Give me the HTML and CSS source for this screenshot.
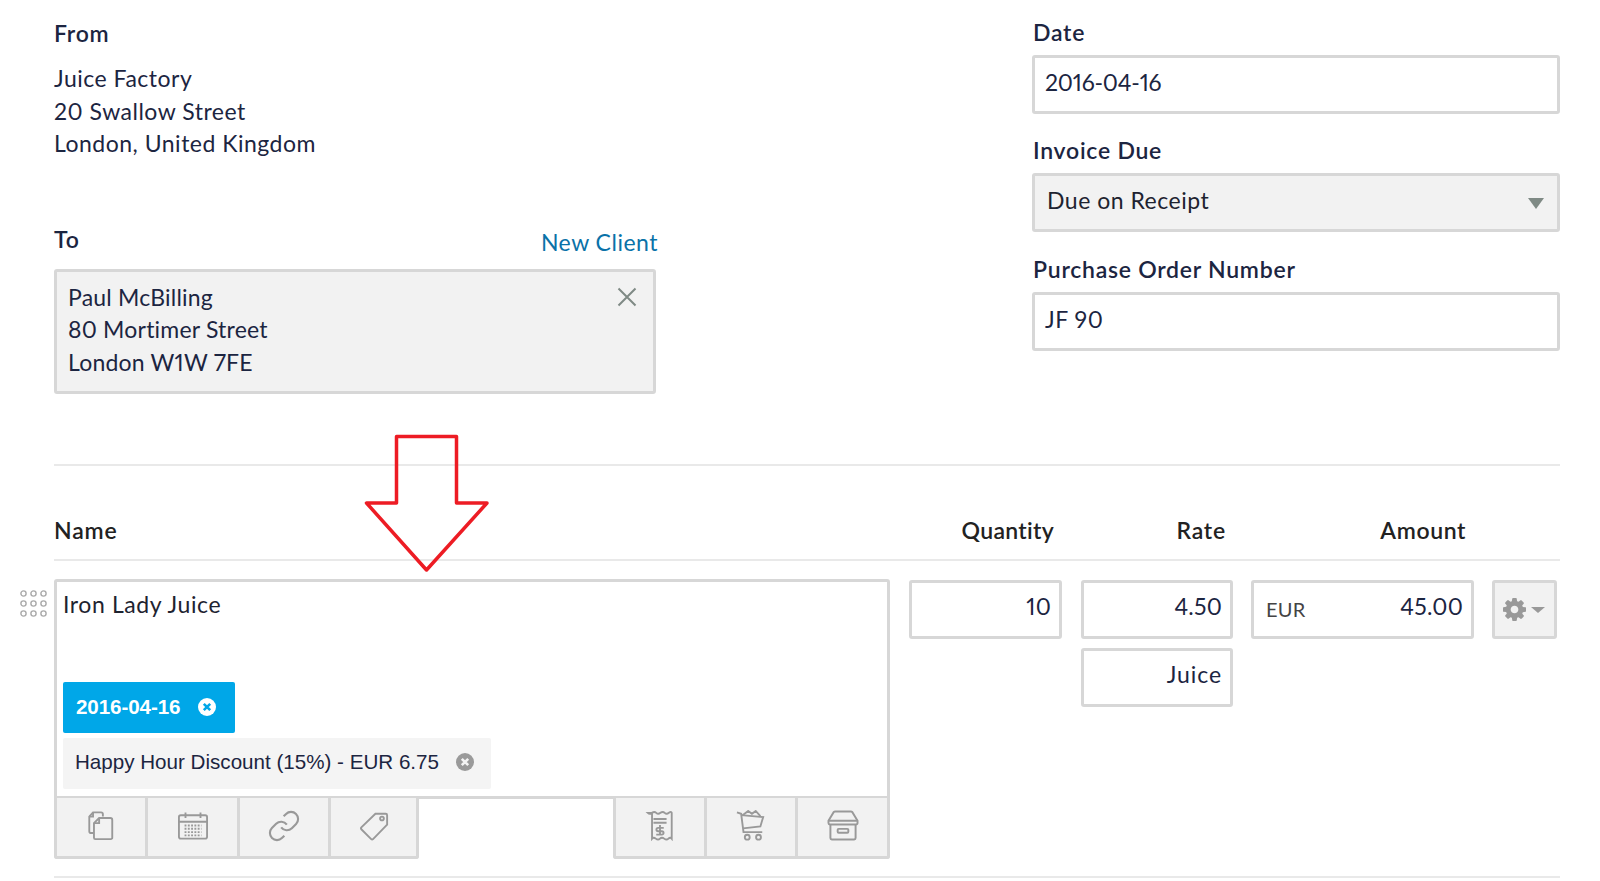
FILE: index.html
```html
<!DOCTYPE html>
<html lang="en">
<head>
<meta charset="utf-8">
<title>Invoice</title>
<link rel="stylesheet" href="styles.css">
</head>
<body>
<main class="page">
  <section class="top">
    <div class="left">
      <div class="label from-label">From</div>
      <div class="address">Juice Factory<br>20 Swallow Street<br>London, United Kingdom</div>
      <div class="to-row">
        <div class="label">To</div>
        <a class="link">New Client</a>
      </div>
      <div class="box to-box">
        <div class="address">Paul McBilling<br>80 Mortimer Street<br>London W1W 7FE</div>
        <svg class="close" viewBox="0 0 20 20"><path d="M1.500 1.500L18.500 18.500M18.500 1.500L1.500 18.500"/></svg>
      </div>
    </div>
    <div class="right">
      <div class="field">
        <div class="label">Date</div>
        <div class="box input date-value">2016-04-16</div>
      </div>
      <div class="field">
        <div class="label">Invoice Due</div>
        <div class="box input select"><span>Due on Receipt</span><i class="caret"></i></div>
      </div>
      <div class="field">
        <div class="label">Purchase Order Number</div>
        <div class="box input">JF 90</div>
      </div>
    </div>
  </section>

  <hr class="rule first-rule">

  <section class="grid head">
    <div>Name</div>
    <div class="num qty">Quantity</div>
    <div class="num rate">Rate</div>
    <div class="num amount-head">Amount</div>
  </section>
  <hr class="rule head-rule">

  <section class="grid line">
    <div class="item">
      <svg class="drag" viewBox="0 0 27 27">
        <circle cx="3.500" cy="3.500" r="2.600"/><circle cx="13.500" cy="3.500" r="2.600"/><circle cx="23.500" cy="3.500" r="2.600"/>
        <circle cx="3.500" cy="13.500" r="2.600"/><circle cx="13.500" cy="13.500" r="2.600"/><circle cx="23.500" cy="13.500" r="2.600"/>
        <circle cx="3.500" cy="23.500" r="2.600"/><circle cx="13.500" cy="23.500" r="2.600"/><circle cx="23.500" cy="23.500" r="2.600"/>
      </svg>
      <div class="item-body">
        <div class="item-name">Iron Lady Juice</div>
        <div class="tag tag-date"><span>2016-04-16</span>
          <svg class="tag-x" viewBox="0 0 18 18"><circle cx="9" cy="9" r="9"/><path d="M5.800 5.800L12.200 12.200M12.200 5.800L5.800 12.200"/></svg>
        </div>
        <div class="tag tag-discount"><span>Happy Hour Discount (15%) - EUR 6.75</span>
          <svg class="tag-x" viewBox="0 0 18 18"><circle cx="9" cy="9" r="9"/><path d="M5.800 5.800L12.200 12.200M12.200 5.800L5.800 12.200"/></svg>
        </div>
      </div>
      <div class="toolbar">
        <div class="tools tools-left">
          <div class="tool"><svg class="icon" viewBox="0 0 32 32"><path d="M8 24H5.500a2 2 0 0 1-2-2V6.500L7.500 2H16a2 2 0 0 1 2 2v2.500"/><path d="M7.500 2v4.500H3.500"/><path d="M14 8h12a2 2 0 0 1 2 2v19a1.500 1.500 0 0 1-1.500 1.500H10a1.500 1.500 0 0 1-1.500-1.500V13.500z"/><path d="M14 8v5.500H8.500"/></svg></div>
          <div class="tool"><svg class="icon" viewBox="0 0 32 32"><rect x="1" y="5" width="30" height="25" rx="2"/><path d="M1 12h30M8 2v6M24 2v6"/><path class="dots" d="M7 16h18M7 19.500h18M7 23h18M7 26.500h18"/></svg></div>
          <div class="tool"><svg class="icon icon-link" viewBox="0 0 24 24"><path d="M10 13a5 5 0 0 0 7.540.540l3-3a5 5 0 0 0-7.070-7.070l-1.720 1.710"/><path d="M14 11a5 5 0 0 0-7.540-.540l-3 3a5 5 0 0 0 7.070 7.070l1.710-1.710"/></svg></div>
          <div class="tool"><svg class="icon" viewBox="0 0 32 32"><path d="M17.500 3.500H28.500a1.500 1.500 0 0 1 1.500 1.500V15L15 30.500a1.500 1.500 0 0 1-2 0L2.500 20a1.500 1.500 0 0 1 0-2z"/><circle cx="24.500" cy="8.500" r="2"/></svg></div>
        </div>
        <div class="tools tools-right">
          <div class="tool"><svg class="icon" viewBox="0 0 32 32"><path d="M3 2.500q2 2 4.500 0t4.500 0 4.500 0 4.500 0 4.500 0 3 0V30q-1.500-2-3.500 0t-4.500 0-4.500 0-4.500 0-4 0V2.500z"/><path d="M9 9h14M9 13h14M16 15.500v11M20 18.500h-6a1.800 1.800 0 0 0 0 3.600h4a1.800 1.800 0 0 1 0 3.600h-6"/></svg></div>
          <div class="tool"><svg class="icon" viewBox="0 0 32 32"><path d="M1 2l4.500 1.500L8 23h20"/><path d="M5.500 5L29 7l-3 10-18.500 2"/><path d="M7 5l6-4.500 4 3 4-3 5 5.500"/><circle cx="12" cy="28.500" r="2.600"/><circle cx="24" cy="28.500" r="2.600"/></svg></div>
          <div class="tool"><svg class="icon icon-box" viewBox="0 0 32 32"><path d="M1 11L6.500 2a2 2 0 0 1 1.500-.5h16a2 2 0 0 1 1.500.5L31 11v2.500a1.500 1.500 0 0 1-1.500 1.500h-27A1.500 1.500 0 0 1 1 13.500z"/><path d="M1 11h30M3 15v14a1.500 1.500 0 0 0 1.500 1.500h23A1.500 1.500 0 0 0 29 29V15"/><rect x="10.500" y="19.500" width="11" height="4" rx="1"/></svg></div>
        </div>
      </div>
    </div>
    <div class="box cell qty">10</div>
    <div class="rate">
      <div class="box cell">4.50</div>
      <div class="box cell unit">Juice</div>
    </div>
    <div class="box cell amount"><span class="currency">EUR</span><span>45.00</span></div>
    <div class="box gear">
      <svg class="gear-icon" viewBox="0 0 1536 1536"><path fill-rule="evenodd" d="M1024 768q0-106-75-181t-181-75-181 75-75 181 75 181 181 75 181-75 75-181zm512-109v222q0 12-8 23t-20 13l-185 28q-19 54-39 91 35 50 107 138 10 12 10 25t-9 23q-27 37-99 108t-94 71q-12 0-26-9l-138-108q-44 23-91 38-16 136-29 186-7 28-36 28h-222q-14 0-24.500-8.500t-11.500-21.500l-28-184q-49-16-90-37l-141 107q-10 9-25 9-14 0-25-11-126-114-165-168-7-10-7-23 0-12 8-23 15-21 51-66.500t54-70.500q-27-50-41-99l-183-27q-13-2-21-12.500t-8-23.500v-222q0-12 8-23t19-13l186-28q14-46 39-92-40-57-107-138-10-12-10-24 0-10 9-23 26-36 98.500-107.500t94.500-71.500q13 0 26 10l138 107q44-23 91-38 16-136 29-186 7-28 36-28h222q14 0 24.500 8.500t11.500 21.500l28 184q49 16 90 37l142-107q9-9 24-9 13 0 25 10 129 119 165 170 7 8 7 22 0 12-8 23-15 21-51 66.500t-54 70.500q26 50 41 98l183 28q13 2 21 12.500t8 23.500z"/></svg>
      <i class="gear-caret"></i>
    </div>
  </section>
  <hr class="rule end-rule">

  <svg class="arrow" viewBox="0 0 128 142"><path d="M32.500 3.500H92.500V70H123L62.500 137L2.500 70H32.500z"/></svg>
</main>
</body>
</html>
```

FILE: styles.css
```css
* { box-sizing: border-box; }
html, body { margin: 0; background: #fff; }
body { font-family: Lato, "Liberation Sans", sans-serif; color: #1c2541; font-size: 23px; letter-spacing: .5px; font-variant-numeric: proportional-nums; }
.page { position: relative; height: 881px; overflow: hidden; padding: 17px 40px 0 54px; }

.top { display: flex; justify-content: space-between; height: 377px; }
.left { width: 602px; padding-top: 1px; }
.right { width: 528px; display: flex; flex-direction: column; gap: 21px; }

.label { font-weight: 600; line-height: 30px; font-size: 23px; letter-spacing: .75px; }
.from-label { margin-bottom: 14px; }
.address { line-height: 32.500px; }
.to-row { display: flex; justify-content: space-between; align-items: flex-start; margin-top: 64px; height: 45px; }
.link { color: #0a72a8; line-height: 30px; margin: 3px -2px 0 0; letter-spacing: .5px; }

.box { border: 3px solid #d7d7d7; border-radius: 3px; }
.field .label { margin-bottom: 8px; padding-left: 1px; }
.field:last-child { margin-top: 1px; }
.input { height: 59px; display: flex; align-items: center; padding: 0 10px 5px; }
.date-value { letter-spacing: -.2px; }
.select { background: #f2f2f2; padding: 0 13px 5px 12px; justify-content: space-between; color: #1e2330; }
.caret { width: 0; height: 0; border-left: 8.500px solid transparent; border-right: 8.500px solid transparent; border-top: 11px solid #7f8a85; margin-top: 7px; }
.to-box { height: 125px; background: #f2f2f2; display: flex; justify-content: space-between; align-items: flex-start; padding: 9px 16px 0 11px; letter-spacing: .2px; }
.close { width: 20px; height: 20px; margin-top: 6px; fill: none; stroke: #7f8a85; stroke-width: 2; }

.rule { border: 0; height: 2px; background: #e9e9e9; margin: 0; }
.first-rule { margin-top: 70px; }

.grid { display: grid; grid-template-columns: 836px 172px 171px 241px 83px; }
.head { height: 93px; padding-top: 48px; font-weight: 600; line-height: 32px; color: #222; letter-spacing: .8px; }
.num { text-align: right; }
.head .qty { margin-right: 8px; letter-spacing: .3px; }
.head .rate { margin-right: 7px; }
.amount-head { margin-right: 8px; letter-spacing: .6px; }
.line { margin-top: 18px; height: 279px; align-items: start; }
.qty { margin-left: 19px; }
.rate { margin-left: 19px; }
.amount { margin-left: 18px; }
.gear { margin-left: 18px; }

.line > .box, .line > .rate { margin-top: 1px; }
.cell { height: 59px; display: flex; justify-content: flex-end; align-items: center; padding: 0 8px 7px; letter-spacing: .2px; }
.unit { margin-top: 9px; letter-spacing: .9px; }
.amount { justify-content: space-between; padding-left: 12px; }
.currency { font-size: 20px; color: #444; padding-top: 5px; }
.gear { height: 59px; background: #f2f2f2; display: flex; align-items: center; padding-left: 8px; gap: 5px; }
.gear-icon { width: 23px; height: 23px; fill: #999; }
.gear-caret { width: 0; height: 0; border-left: 7px solid transparent; border-right: 7px solid transparent; border-top: 6px solid #999; }

.item { position: relative; }
.drag { position: absolute; left: -34px; top: 11px; width: 27px; height: 27px; fill: none; stroke: #aaa; stroke-width: 1.400; }
.item-body { border: 3px solid #d7d7d7; border-radius: 3px 3px 0 0; padding: 6px 6px 6px; height: 220px; }
.item-name { height: 94px; line-height: 32px; color: #1e2330; letter-spacing: .6px; }
.tag { height: 51px; display: flex; align-items: center; border-radius: 2px; font-family: "Liberation Sans", Arial, sans-serif; font-size: 20.600px; letter-spacing: 0; padding-bottom: 2px; }
.tag-date { width: 172px; background: #00a7e8; color: #fff; padding-left: 13px; gap: 18px; font-weight: 700; margin-bottom: 5px; letter-spacing: -.1px; }
.tag-discount { width: 428px; background: #f4f4f4; padding-left: 12px; gap: 17px; padding-bottom: 4px; }
.tag-x { width: 18px; height: 18px; flex: none; }
.tag-date .tag-x circle { fill: #fff; }
.tag-date .tag-x path { stroke: #00a7e8; stroke-width: 2.600; }
.tag-discount .tag-x circle { fill: #9a9a9a; }
.tag-discount .tag-x path { stroke: #f4f4f4; stroke-width: 2.600; }

.toolbar { display: flex; justify-content: space-between; height: 61px; margin-top: -1px; }
.tools { display: flex; border: 3px solid #d7d7d7; border-top: 0; background: #f2f2f2; border-radius: 0 0 3px 3px; }
.tool { height: 58px; display: flex; align-items: center; justify-content: center; border-left: 3px solid #d7d7d7; padding-bottom: 3px; }
.tool:first-child { border-left: 0; width: 88px; }
.tools-left .tool:nth-child(2) { width: 92px; }
.tools-left .tool:nth-child(3) { width: 91px; }
.tools-left .tool:nth-child(4) { width: 88px; }
.tools-right .tool:nth-child(2) { width: 91px; }
.tools-right .tool:nth-child(3) { width: 92px; }
.icon { width: 30px; height: 31px; fill: none; stroke: #999; stroke-width: 2; }
.icon-box { width: 32px; }
.icon-link { width: 34px; height: 34px; stroke-width: 1.500; }
.icon .dots { stroke-width: 2; stroke-dasharray: 2 1.500; }

.end-rule { margin-top: 18px; }
.arrow { position: absolute; left: 364px; top: 433px; width: 128px; height: 142px; fill: none; stroke: #ed1c24; stroke-width: 3.500; stroke-linejoin: round; }
```
